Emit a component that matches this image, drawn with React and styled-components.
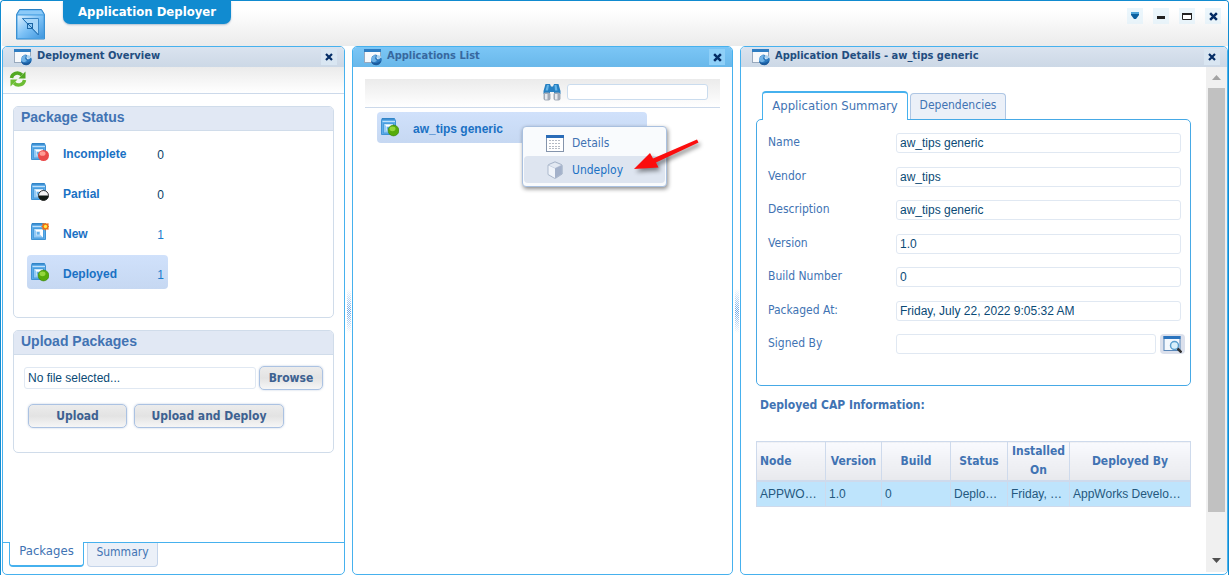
import React from "react";
import styled, { createGlobalStyle, css } from "styled-components";

const ui = `"DejaVu Sans Condensed", "Noto Sans", sans-serif`;
const arial = `"Liberation Sans", Arial, sans-serif`;

const Global = createGlobalStyle`
  *, *::before, *::after { box-sizing: border-box; }
  body { margin: 0; background: #fff; font-family: ${ui}; font-size: 12px; color: #4173b3; }
  button, input { font: inherit; color: inherit; margin: 0; }
  button { cursor: pointer; }
`;

const Window = styled.div`
  min-height: 100vh;
  display: flex;
  flex-direction: column;
  padding-left: 1px;
  border: 1px solid #118bd0;
  border-bottom: 0;
  border-radius: 4px 4px 0 0;
  overflow: hidden;
`;

const TitleBar = styled.header`
  height: 45px;
  display: flex;
  align-items: flex-start;
  background: linear-gradient(#fff 20%, #ebebeb);
  padding-left: 13px;
`;

const Logo = styled.div`
  padding-top: 7px;
  width: 48px;
  svg { display: block; }
`;

const Title = styled.h1`
  margin: 0;
  height: 23px;
  width: 168px;
  text-align: center;
  font: bold 13px/22px ${ui};
  color: #fff;
  background: #118bd0;
  border-radius: 0 0 7px 7px;
  box-shadow: 0 1px 2px rgba(0, 60, 120, 0.3);
`;

const WindowControls = styled.div`
  margin-left: auto;
  display: flex;
  gap: 10px;
  padding: 7px 7px 0 0;
`;

const IconButton = styled.button`
  width: 16px;
  height: 16px;
  padding: 0;
  border: 0;
  display: grid;
  place-items: center;
  background: ${(p) => p.$bg || "rgba(222, 240, 250, 0.6)"};
  svg { display: block; }
`;

const Workspace = styled.main`
  flex: 1;
  display: grid;
  grid-template-columns: 343fr 7px 381fr 7px 488fr;
`;

const Panel = styled.section`
  min-width: 0;
  display: flex;
  flex-direction: column;
  border: 1px solid #46b1ee;
  border-radius: 5px;
  background: #fff;
`;

const PanelHeader = styled.div`
  height: 20px;
  display: flex;
  align-items: center;
  gap: 5px;
  padding: 0 7px 0 11px;
  border-radius: 4px 4px 0 0;
  background: ${(p) => (p.$active ? "linear-gradient(#7bc6f6, #69b8ea)" : "linear-gradient(#dae3ef, #ccd8e6)")};
  color: ${(p) => (p.$active ? "#37689f" : "#224d80")};
`;

const PanelTitle = styled.h2`
  margin: 0;
  padding-bottom: 2px;
  flex: 1;
  font: bold 11px/18px ${ui};
  white-space: nowrap;
`;

const Splitter = styled.div`
  align-self: center;
  justify-self: center;
  width: 4px;
  height: 44px;
  background: conic-gradient(#6aa6e6 25%, transparent 0 50%, #6aa6e6 0 75%, transparent 0) 0 0 / 2px 2px;
  mask-image: linear-gradient(transparent, #000, transparent);
`;

const Toolbar = styled.div`
  height: ${(p) => p.$height};
  margin: ${(p) => p.$margin || 0};
  padding: ${(p) => p.$padding};
  display: flex;
  align-items: flex-start;
  gap: 6px;
  background: linear-gradient(#ebebeb, #fff);
  border-bottom: 1px solid #ccd9ea;
`;

const SearchBox = styled.input`
  width: 141px;
  height: 16px;
  margin-top: 1px;
  border: 1px solid #cadcee;
  border-radius: 3px;
  background: #fff;
`;

const Groups = styled.div`
  padding: 12px 10px;
  display: flex;
  flex-direction: column;
  gap: 12px;
`;

const Group = styled.section`
  border: 1px solid #d0dcea;
  border-radius: 5px;
`;

const GroupTitle = styled.h3`
  margin: 0;
  height: 24px;
  padding-left: 7px;
  font: bold 14px/21px ${arial};
  background: #e1e8f4;
  border-bottom: 1px solid #d0dcea;
  border-radius: 4px 4px 0 0;
`;

const StatusList = styled.ul`
  list-style: none;
  margin: 0;
  padding: 4px 13px 28px;
  display: flex;
  flex-direction: column;
  gap: 6px;
`;

const selected = css`
  background: linear-gradient(#d0e1fb, #c6d8f2);
`;

const StatusRow = styled.li`
  width: 141px;
  height: 34px;
  padding: 0 4px;
  display: flex;
  align-items: center;
  border-radius: 4px;
  font: 12px/18px ${arial};
  color: ${(p) => (p.$used ? "#1b7dcc" : "#0b3f68")};
  ${(p) => p.$selected && selected}
  svg { margin-right: 14px; flex: none; }
`;

const StatusLink = styled.a`
  flex: 1;
  padding-top: 3px;
  font-weight: bold;
  color: #1a71c4;
  text-decoration: none;
`;

const Count = styled.span`
  padding-top: 5px;
`;

const UploadForm = styled.form`
  padding: 11px 10px 24px;
`;

const FileRow = styled.div`
  display: flex;
  align-items: center;
  gap: 3px;
`;

const ButtonRow = styled.div`
  display: flex;
  gap: 7px;
  padding: 14px 4px 0;
`;

const TextBox = styled.input`
  flex: 1;
  min-width: 0;
  width: 100%;
  height: ${(p) => p.$height || "20px"};
  padding: 0 3px;
  border: 1px solid #e0e8f2;
  border-radius: 3px;
  background: #fff;
  font: 12px ${arial};
  color: #0a4a76;
`;

const Button = styled.button`
  width: ${(p) => p.$width};
  height: ${(p) => p.$height || "24px"};
  padding: 0;
  border: 1px solid #abc2e2;
  border-radius: 5px;
  background: linear-gradient(#ececec, #e3e3e3 50%, #f6f6f6);
  box-shadow: 0 0 2px rgba(120, 150, 190, 0.5);
  font: bold 12px/18px ${ui};
  color: #3d6191;
`;

const BottomTabs = styled.nav`
  margin-top: auto;
  height: 32px;
  padding-left: 6px;
  display: flex;
  align-items: flex-start;
  gap: 3px;
  border-top: 1px solid #46b1ee;
`;

const BottomTab = styled.button`
  width: ${(p) => (p.$active ? "75px" : "71px")};
  height: ${(p) => (p.$active ? "25px" : "24px")};
  margin-top: ${(p) => (p.$active ? "-1px" : 0)};
  padding: 0 0 5px;
  border: 1px solid ${(p) => (p.$active ? "#46b1ee" : "#c4d4ea")};
  border-top: 0;
  border-bottom-width: ${(p) => (p.$active ? "2px" : "1px")};
  border-radius: 0 0 4px 4px;
  background: ${(p) => (p.$active ? "#fff" : "#ebf0f8")};
  font: ${(p) => (p.$active ? "13px/18px" : "12px/18px")} ${ui};
`;

const AppItem = styled.div`
  position: relative;
  width: 270px;
  height: 31px;
  margin: 4px 0 0 24px;
  padding-left: 4px;
  display: flex;
  align-items: center;
  gap: 14px;
  border-radius: 4px;
  ${selected}
`;

const AppLink = styled(StatusLink)`
  font: bold 12px/18px ${arial};
`;

const ContextMenu = styled.div`
  position: absolute;
  left: 145px;
  top: 14px;
  width: 145px;
  padding: 2px 1px 3px;
  border: 1px solid #a9c0df;
  border-radius: 4px;
  background: #f9fbfd;
  box-shadow: 1px 2px 4px rgba(0, 0, 0, 0.45);
`;

const MenuItem = styled.button`
  width: 100%;
  height: 27px;
  padding: 1px 0 0 22px;
  border: 0;
  border-radius: 4px;
  display: flex;
  align-items: center;
  gap: 8px;
  background: ${(p) => (p.$hover ? "#dee5f0" : "transparent")};
  font: 12px/18px ${ui};
  color: ${(p) => (p.$hover ? "#1a71c4" : "#4173b3")};
`;

const Pointer = styled.svg`
  position: absolute;
  left: 255px;
  top: 22px;
  filter: drop-shadow(2px 3px 2px rgba(0, 0, 0, 0.45));
`;

const ScrollArea = styled.div`
  flex: 1;
  min-height: 0;
  display: flex;
`;

const Details = styled.div`
  flex: 1;
  min-width: 0;
  padding: 24px 15px 0;
`;

const ScrollBar = styled.div`
  width: 21px;
  margin-bottom: 2px;
  padding: 0 2px;
  background: #f0f0f0;
  display: flex;
  flex-direction: column;
`;

const ScrollButton = styled.button`
  height: ${(p) => (p.$down ? "23px" : "21px")};
  padding: 0;
  border: 0;
  background: none;
  display: grid;
  place-items: center;
`;

const Track = styled.div`
  flex: 1;
`;

const Thumb = styled.div`
  height: 92%;
  background: #c1c1c1;
`;

const TopTabs = styled.nav`
  display: flex;
  align-items: flex-end;
  gap: 2px;
  padding-left: 6px;
`;

const TopTab = styled.button`
  position: relative;
  width: ${(p) => (p.$active ? "146px" : "96px")};
  height: ${(p) => (p.$active ? "29px" : "26px")};
  margin-bottom: ${(p) => (p.$active ? "-1px" : 0)};
  padding: 0 0 ${(p) => (p.$active ? "1px" : "3px")};
  border: 1px solid ${(p) => (p.$active ? "#46b1ee" : "#aec6e4")};
  border-bottom: 0;
  border-top-width: ${(p) => (p.$active ? "2px" : "1px")};
  border-radius: 4px 4px 0 0;
  background: ${(p) => (p.$active ? "#fff" : "#ebf0f8")};
  font: ${(p) => (p.$active ? "13px/18px" : "12px/18px")} ${ui};
`;

const Summary = styled.div`
  height: 267px;
  border: 1px solid #46a9e6;
  border-radius: 5px;
  padding: 13px 9px 31px 11px;
  display: flex;
  flex-direction: column;
  justify-content: space-between;
`;

const Field = styled.div`
  display: flex;
  align-items: center;
  height: 20px;
`;

const FieldLabel = styled.label`
  width: 128px;
  flex: none;
  padding-bottom: 2px;
  font: 12px/16px ${ui};
`;

const LookupButton = styled(IconButton)`
  width: 25px;
  height: 20px;
  margin: 0 -4px 0 4px;
  border-radius: 4px;
`;

const SectionTitle = styled.h3`
  margin: 10px 0 26px 4px;
  font: bold 12px/19px ${ui};
`;

const Table = styled.table`
  width: 100%;
  table-layout: fixed;
  border-collapse: collapse;
  th, td { border: 1px solid #cedaec; padding: 0 3px; }
  th {
    height: 38px;
    padding: 0;
    font: bold 12px/19px ${ui};
    background: linear-gradient(#f9fafe, #e8e9ed);
    border-bottom: 2px solid #cedaec;
  }
  th:first-child { text-align: left; padding-left: 3px; }
  td {
    height: 25px;
    font: 12px/18px ${arial};
    color: #24587e;
    background: #bee4fc;
    white-space: nowrap;
  }
`;

const CloseIcon = ({ size = 8 }) => (
  <svg width={size} height={size} viewBox="0 0 8 8" aria-hidden="true">
    <path d="M1 1l6 6M7 1l-6 6" stroke="#052d66" strokeWidth="2.2" />
  </svg>
);

const PanelIcon = () => (
  <svg width="18" height="18" viewBox="0 0 18 18" aria-hidden="true">
    <rect x=".5" y="1.5" width="16" height="13" fill="#f7f9fc" stroke="#98a9bd" />
    <rect x="0" y="1" width="17" height="3" fill="#2f7dc2" />
    <path d="M8 8.500l3-2 2 .5-.5 3 1.500 1.500 3-2 .8 1.500c0 3.500-2.300 6-5.500 6S7 15 7 12.500z" fill="#2a78be" />
    <path d="M7.500 9.500l3-2.500 1.500.5-1 3 2 2.500-3.500 1.500L7 12.500z" fill="#72b3e6" />
    <path d="M13 7c2.500 0 4 1 4.500 2.500L14.500 11l-1.500-1.500z" fill="#a9d1f0" />
    <path d="M7.200 13.500c2.500 2 7 2 10-1-.5 3-2.500 4.800-5 4.800s-4.500-1.500-5-3.800z" fill="#1c5c9e" />
  </svg>
);

const AppLogo = () => (
  <svg width="32" height="34" viewBox="0 0 32 34" aria-hidden="true">
    <defs>
      <linearGradient id="logoFace" x2="1" y2="1">
        <stop offset="0" stopColor="#dff1ff" />
        <stop offset=".5" stopColor="#7cc1f6" />
        <stop offset="1" stopColor="#3e95dd" />
      </linearGradient>
    </defs>
    <path d="M4.500 1.500h22l3 5v24.500H1.500V6.500z" fill="#58aef0" stroke="#2b80c4" />
    <path d="M5 2.500h21l2.500 4H2.500z" fill="#8ccaf8" />
    <rect x="2" y="7" width="27" height="23.500" fill="url(#logoFace)" stroke="#4a9fe0" />
    <path d="M7.500 10.500H23.500V27z" fill="#a8d7fa" stroke="#3b87c6" />
    <path d="M7.500 10.500L23.500 27" stroke="#2271b4" />
    <rect x="12.500" y="15.500" width="5" height="5" fill="#8fc9f5" stroke="#1b65a5" />
    <path d="M13 16l4.500 4.500" stroke="#1b65a5" />
  </svg>
);

const RefreshIcon = () => (
  <svg width="18" height="18" viewBox="0 0 18 18" aria-hidden="true">
    <g>
      <path d="M2.500 8C3 3.500 9 1 13 5" fill="none" stroke="#52a822" strokeWidth="3.400" />
      <path d="M16.500 1.500v7H9.500z" fill="#52a822" />
    </g>
    <g transform="rotate(180 9 9)">
      <path d="M2.500 8C3 3.500 9 1 13 5" fill="none" stroke="#6dbd35" strokeWidth="3.400" />
      <path d="M16.500 1.500v7H9.500z" fill="#6dbd35" />
    </g>
  </svg>
);

const PackageIcon = ({ kind }) => (
  <svg width="18" height="19" viewBox="0 0 18 19" aria-hidden="true">
    <path d="M1 .5h12.500l1 2.500V16.500H.5V3z" fill="#5fadea" stroke="#3f93d4" />
    <path d="M1 1h12.500" stroke="#2576bb" />
    <path d="M1.500 3.500h12.500" stroke="#bfe0f9" />
    <rect x="2.500" y="5.500" width="10" height="9.500" fill="#93caf5" stroke="#4a9ddd" />
    <path d="M3.500 6.500h8.500v8z" fill="#fff" />
    <rect x="5.500" y="8.500" width="3.500" height="3.500" fill="#64b0ea" stroke="#e4f2fd" strokeWidth=".6" />
    {kind === "incomplete" && (
      <>
        <circle cx="12.500" cy="12.500" r="5.500" fill="#ea4b4b" />
        <ellipse cx="11.500" cy="10.500" rx="3" ry="2.300" fill="#ff9b94" />
      </>
    )}
    {kind === "deployed" && (
      <>
        <circle cx="12.500" cy="12.500" r="5.400" fill="#56ab0a" stroke="#32800a" strokeWidth=".6" />
        <ellipse cx="11.500" cy="10.800" rx="3" ry="2.400" fill="#94d63c" />
      </>
    )}
    {kind === "partial" && (
      <>
        <circle cx="12.500" cy="12.500" r="5" fill="#f4f4f4" stroke="#333" />
        <path d="M7.500 12.500h10a5 5 0 0 1-10 0z" fill="#111a14" />
      </>
    )}
    {kind === "new" && (
      <>
        <path d="M14.500-.2l1 1.200 1.800-.4-.1 1.900 1 1-1 1 .1 1.900-1.800-.4-1 1.300-1-1.300-1.800.4.100-1.900-1.300-1 1.300-1-.1-1.900 1.800.4z" fill="#ee6a10" stroke="#f07a20" strokeWidth=".6" />
        <circle cx="14.500" cy="3.500" r="1.700" fill="#ffe94a" />
      </>
    )}
  </svg>
);

const Binoculars = () => (
  <svg width="18" height="18" viewBox="0 0 18 18" aria-hidden="true">
    <path d="M2.500 1h4.500l1 2.500h2L11 1h4.500l2 7v3h-6.500V9H7v2H.5V8z" fill="#2780c2" />
    <path d="M4 2h2L5 7.500H2.500zM11.500 2h2l1 5.500H12z" fill="#64b4e8" />
    <rect x=".5" y="9.500" width="7" height="8" rx="2" fill="#a2abb8" />
    <rect x="10.500" y="9.500" width="7" height="8" rx="2" fill="#a2abb8" />
    <rect x="2" y="11" width="2.500" height="5.500" fill="#e6e9ee" />
    <rect x="12" y="11" width="2.500" height="5.500" fill="#e6e9ee" />
  </svg>
);

const GridIcon = () => (
  <svg width="18" height="17" viewBox="0 0 18 17" aria-hidden="true">
    <rect x=".5" y=".5" width="17" height="16" fill="#fff" stroke="#8494ac" />
    <rect width="18" height="3" fill="#2a6cb8" />
    <path d="M3 5.500h12M3 8.500h12M3 11.500h12M3 13.500h12" stroke="#b4bac5" strokeDasharray="2 1" />
  </svg>
);

const CubeIcon = () => (
  <svg width="18" height="18" viewBox="0 0 18 18" aria-hidden="true">
    <path d="M9 .8l6.500 2.700q.7.500.7 1.200v8.300L10 17q-1 .5-2 0l-6-3.500V4.700q0-.8.700-1.200z" fill="#b9c5d8" stroke="#9fadc3" strokeWidth=".8" />
    <path d="M9 1.500l6 2.500-6 3-6-3z" fill="#e3e9f2" />
    <path d="M2.500 4.500L9 7.500V17l-6.500-3.700z" fill="#f0f4fa" />
    <path d="M9 7.500l6.700-3v8.300L9 17z" fill="#a3b1ca" />
  </svg>
);

const LookupIcon = () => (
  <svg width="19" height="17" viewBox="0 0 19 17" aria-hidden="true">
    <rect x="1" y=".5" width="16" height="14" fill="#f4f8fd" stroke="#5886b8" />
    <rect x=".5" width="17" height="3" fill="#2b74be" />
    <circle cx="11.500" cy="9.500" r="4" fill="#d8f0fb" stroke="#5a9fce" strokeWidth="1.500" />
    <path d="M14.500 12.500l4 4" stroke="#333" strokeWidth="2.500" />
  </svg>
);

const Header = ({ title, active }) => (
  <PanelHeader $active={active}>
    <PanelIcon />
    <PanelTitle>{title}</PanelTitle>
    <IconButton aria-label={`Close ${title}`} $bg={active ? "#8fd0f8" : "#d9e6f2"}>
      <CloseIcon size={active ? 9 : 8} />
    </IconButton>
  </PanelHeader>
);

const statuses = [
  { kind: "incomplete", label: "Incomplete", count: 0 },
  { kind: "partial", label: "Partial", count: 0 },
  { kind: "new", label: "New", count: 1 },
  { kind: "deployed", label: "Deployed", count: 1, selected: true },
];

const fields = [
  ["Name", "aw_tips generic"],
  ["Vendor", "aw_tips"],
  ["Description", "aw_tips generic"],
  ["Version", "1.0"],
  ["Build Number", "0"],
  ["Packaged At:", "Friday, July 22, 2022 9:05:32 AM"],
  ["Signed By", ""],
];

const columns = [
  ["Node", 69, "APPWO…"],
  ["Version", 56, "1.0"],
  ["Build", 69, "0"],
  ["Status", 57, "Deplo…"],
  ["Installed On", 62, "Friday, …"],
  ["Deployed By", 121, "AppWorks Develo…"],
];

export default function App() {
  return (
    <>
      <Global />
      <Window>
        <TitleBar>
          <Logo><AppLogo /></Logo>
          <Title>Application Deployer</Title>
          <WindowControls>
            <IconButton aria-label="Menu">
              <svg width="8" height="8" viewBox="0 0 8 8"><path d="M0 0h8v2H0z" fill="#4da3d8" /><path d="M0 2h8v1L5 7H3L0 3z" fill="#0c5f9e" /></svg>
            </IconButton>
            <IconButton aria-label="Minimize">
              <svg width="8" height="8" viewBox="0 0 8 8"><path d="M0 4h8v3H0z" fill="#222" /></svg>
            </IconButton>
            <IconButton aria-label="Maximize">
              <svg width="10" height="7" viewBox="0 0 10 7"><path d="M.5 1h9v5.500h-9z" fill="#fff" stroke="#222" /><path d="M0 1h10" stroke="#222" strokeWidth="2" /></svg>
            </IconButton>
            <IconButton aria-label="Close"><CloseIcon size={9} /></IconButton>
          </WindowControls>
        </TitleBar>
        <Workspace>
          <Panel>
            <Header title="Deployment Overview" />
            <Toolbar $height="27px" $padding="3px 6px">
              <IconButton aria-label="Refresh" $bg="none"><RefreshIcon /></IconButton>
            </Toolbar>
            <Groups>
              <Group>
                <GroupTitle>Package Status</GroupTitle>
                <StatusList>
                  {statuses.map((s) => (
                    <StatusRow key={s.kind} $selected={s.selected} $used={s.count > 0}>
                      <PackageIcon kind={s.kind} />
                      <StatusLink href="#">{s.label}</StatusLink>
                      <Count>{s.count}</Count>
                    </StatusRow>
                  ))}
                </StatusList>
              </Group>
              <Group>
                <GroupTitle>Upload Packages</GroupTitle>
                <UploadForm>
                  <FileRow>
                    <TextBox $height="22px" aria-label="File" defaultValue="No file selected..." />
                    <Button type="button" $width="64px">Browse</Button>
                  </FileRow>
                  <ButtonRow>
                    <Button type="button" $width="99px">Upload</Button>
                    <Button type="button" $width="150px">Upload and Deploy</Button>
                  </ButtonRow>
                </UploadForm>
              </Group>
            </Groups>
            <BottomTabs>
              <BottomTab $active>Packages</BottomTab>
              <BottomTab>Summary</BottomTab>
            </BottomTabs>
          </Panel>
          <Splitter />
          <Panel>
            <Header title="Applications List" active />
            <Toolbar $height="29px" $margin="12px 12px 0" $padding="4px 12px 0 178px">
              <Binoculars />
              <SearchBox aria-label="Search applications" />
            </Toolbar>
            <AppItem>
              <PackageIcon kind="deployed" />
              <AppLink href="#">aw_tips generic</AppLink>
              <ContextMenu>
                <MenuItem><GridIcon />Details</MenuItem>
                <MenuItem $hover><CubeIcon />Undeploy</MenuItem>
              </ContextMenu>
              <Pointer width="70" height="40" viewBox="0 0 70 40" aria-hidden="true">
                <path d="M65 5.500L66.500 8.500 24 28.500 26.500 33.500 2 35 18 19 21 24.500z" fill="#fb0d0d" />
              </Pointer>
            </AppItem>
          </Panel>
          <Splitter />
          <Panel>
            <Header title="Application Details - aw_tips generic" />
            <ScrollArea>
              <Details>
                <TopTabs>
                  <TopTab $active>Application Summary</TopTab>
                  <TopTab>Dependencies</TopTab>
                </TopTabs>
                <Summary>
                  {fields.map(([label, value]) => (
                    <Field key={label}>
                      <FieldLabel htmlFor={label}>{label}</FieldLabel>
                      <TextBox id={label} defaultValue={value} />
                      {label === "Signed By" && (
                        <LookupButton aria-label="Show certificate" $bg="#dbe0ec"><LookupIcon /></LookupButton>
                      )}
                    </Field>
                  ))}
                </Summary>
                <SectionTitle>Deployed CAP Information:</SectionTitle>
                <Table>
                  <colgroup>
                    {columns.map(([name, width]) => <col key={name} style={{ width }} />)}
                  </colgroup>
                  <thead>
                    <tr>{columns.map(([name]) => <th key={name}>{name}</th>)}</tr>
                  </thead>
                  <tbody>
                    <tr>{columns.map(([name, , value]) => <td key={name}>{value}</td>)}</tr>
                  </tbody>
                </Table>
              </Details>
              <ScrollBar>
                <ScrollButton aria-label="Scroll up">
                  <svg width="9" height="5" viewBox="0 0 9 5"><path d="M0 5l4.500-5L9 5z" fill="#a3a3a3" /></svg>
                </ScrollButton>
                <Track><Thumb /></Track>
                <ScrollButton $down aria-label="Scroll down">
                  <svg width="9" height="5" viewBox="0 0 9 5"><path d="M0 0l4.500 5L9 0z" fill="#505050" /></svg>
                </ScrollButton>
              </ScrollBar>
            </ScrollArea>
          </Panel>
        </Workspace>
      </Window>
    </>
  );
}
